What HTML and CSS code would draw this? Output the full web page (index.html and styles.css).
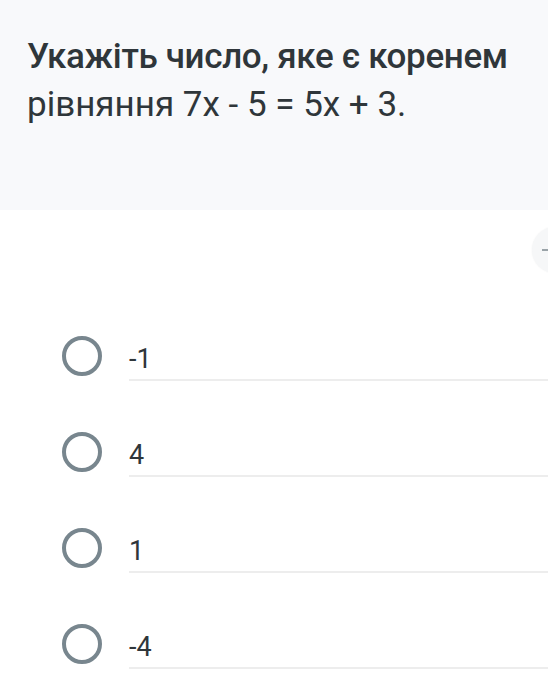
FILE: index.html
```html
<!DOCTYPE html>
<html lang="uk">
<head>
    <meta charset="UTF-8">
    <meta name="viewport" content="width=device-width, initial-scale=1.0">
    <title>Питання</title>
    <link rel="stylesheet" href="styles.css">
</head>
<body>
    <div class="питання">
        <p class="текст-питання"><b>Укажіть число, яке є коренем</b> рівняння 7x - 5 = 5x + 3.</p>
    </div>

    <div class="інструменти">
        <div class="кнопка-кругла"><span class="риска"></span></div>
    </div>

    <div class="варіанти">
        <label class="варіант">
            <span class="радіо"></span>
            <span class="відповідь">-1</span>
        </label>
        <label class="варіант">
            <span class="радіо"></span>
            <span class="відповідь">4</span>
        </label>
        <label class="варіант">
            <span class="радіо"></span>
            <span class="відповідь">1</span>
        </label>
        <label class="варіант">
            <span class="радіо"></span>
            <span class="відповідь">-4</span>
        </label>
    </div>
</body>
</html>
```

FILE: styles.css
```css
body {
    margin: 0;
    font-family: Roboto, "Liberation Sans", sans-serif;
    color: #2f363a;
    background-color: #ffffff;
    overflow: hidden;
}

.питання {
    background-color: #f8f9fb;
    height: 210px;
    padding: 33px 8px 0 27px;
    box-sizing: border-box;
}

.текст-питання {
    margin: 0;
    font-size: 35px;
    line-height: 48px;
}

.текст-питання b {
    font-weight: 500;   /*перший рядок трохи жирніший*/
    letter-spacing: -0.35px;
}

.інструменти {
    display: flex;
    justify-content: flex-end;
    padding-top: 17px;
    height: 121px;
    box-sizing: border-box;
    overflow: hidden;   /*кнопку видно тільки наполовину*/
}

.кнопка-кругла {
    width: 46px;
    height: 46px;
    border-radius: 50%;
    background-color: #f6f7f8;
    box-shadow: 0 0 2px rgba(0, 0, 0, 0.06);
    margin-right: -30px;
    flex-shrink: 0;
    display: flex;
    align-items: center;
}

.риска {
    display: block;
    width: 6px;
    height: 2px;
    margin-left: 10px;
    background-color: #9aa3a8;
}

.варіанти {
    display: flex;
    flex-direction: column;
    gap: 46px;
}

.варіант {
    display: flex;
    align-items: center;
    gap: 27px;
    padding-left: 62px;
}

.радіо {
    width: 40px;
    height: 40px;
    border: 4px solid #78868e;
    border-radius: 50%;
    box-sizing: border-box;
    flex-shrink: 0;
}

.відповідь {
    flex: 1;
    font-size: 27px;
    line-height: 32px;
    padding: 12px 0 4px;
    border-bottom: 2px solid #ededed;
}
```
